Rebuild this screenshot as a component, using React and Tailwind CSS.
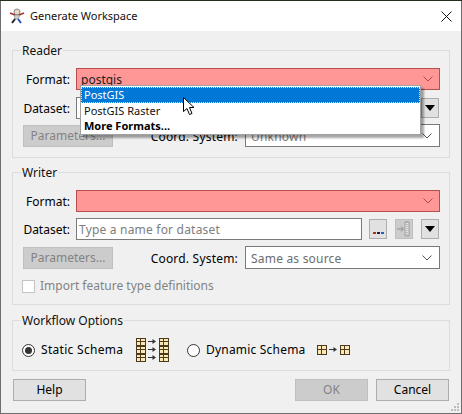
import React from "react";

const FONT = "font-['Noto_Sans','Open_Sans',sans-serif]";

function Chevron({ color = "#555" }) {
  return (
    <svg width="10" height="6" viewBox="0 0 10 6" fill="none">
      <path d="M0.5 0.5 L5 5 L9.5 0.5" stroke={color} strokeWidth="1" />
    </svg>
  );
}

function TableIcon({ x, y, h = 8 }) {
  return (
    <g transform={`translate(${x} ${y})`}>
      <rect x="0.5" y="0.5" width="9" height={h - 1} fill="#fde8b4" stroke="#4a3a20" />
      <path d={`M4.5 1V${h - 1}M1 ${h / 2 - 0.5}H9`} stroke="#4a3a20" strokeWidth="1" />
    </g>
  );
}

function Arrow({ x, y }) {
  return (
    <g transform={`translate(${x} ${y})`}>
      <path d="M0 3.5H5" stroke="#333" strokeWidth="1" />
      <path d="M4.5 1 L8 3.5 L4.5 6Z" fill="#333" />
    </g>
  );
}

function StaticSchemaIcon() {
  return (
    <svg width="33" height="24" viewBox="0 0 33 24" className="block shrink-0">
      {[0, 8, 16].map((y) => (
        <g key={y}>
          <TableIcon x={0} y={y} />
          <Arrow x={12} y={y} />
          <TableIcon x={23} y={y} />
        </g>
      ))}
    </svg>
  );
}

function DynamicSchemaIcon() {
  return (
    <svg width="33" height="10" viewBox="0 0 33 10" className="block shrink-0">
      <TableIcon x={0} y={0} h={10} />
      <Arrow x={12} y={1} />
      <TableIcon x={23} y={0} h={10} />
    </svg>
  );
}

function GroupBox({ title, className, children }) {
  return (
    <fieldset className={`border border-[#dcdcdc] mx-0 px-[9px] ${className}`}>
      <legend className="px-px -ml-px h-4 leading-4 pt-px text-[#111]">{title}</legend>
      {children}
    </fieldset>
  );
}

function Label({ children }) {
  return <div className="w-[48px] shrink-0 pt-px text-right whitespace-nowrap mr-[6px] text-black">{children}</div>;
}

function FormatCombo({ value, children }) {
  return (
    <div className="relative flex-1 h-[22px] border border-[#b64f4f] bg-[#ff9797] flex items-center pl-[4px] pr-[6px]">
      <span className="flex-1 pt-px text-[#1a1a1a]">{value}</span>
      <Chevron color="#b04a4a" />
      {children}
    </div>
  );
}

function CoordCombo({ value, muted }) {
  return (
    <div className="w-[195px] h-[23px] border border-[#7a7a7a] bg-white flex items-center pl-[5px] pr-[7px]">
      <span className={`flex-1 pt-[2px] tracking-[0.2px] ${muted ? "text-[#7d7d7d]" : "text-[#6d6d6d]"}`}>{value}</span>
      <Chevron />
    </div>
  );
}

function DatasetRow({ placeholder }) {
  return (
    <div className="flex items-center h-[22px]">
      <Label>Dataset:</Label>
      <div className="w-[286px] h-[22px] border border-[#7a7a7a] bg-white pl-[2px] pt-px leading-[20px] tracking-[0.2px] text-[#7d7d7d]">
        {placeholder}
      </div>
      <div className="ml-[7px] w-[18px] h-[20px] border border-[#adadad] bg-[#e1e1e1] flex items-end justify-center pb-[4px] gap-px">
        <i className="w-[3px] h-[2px] bg-[#b03020]" />
        <i className="w-[3px] h-[2px] bg-[#222]" />
        <i className="w-[3px] h-[2px] bg-[#2060c0]" />
      </div>
      <div className="ml-[8px] w-[18px] h-[20px] border border-[#bfbfbf] bg-[#cccccc] flex items-center justify-center">
        <svg width="14" height="16" viewBox="0 0 14 16" fill="none">
          <path d="M0 8H6M4 5.5L6.5 8L4 10.5" stroke="#8d8d8d" />
          <path d="M8 1H12V15H8Z" fill="#e6e6e6" stroke="#9a9a9a" />
          <path d="M10 1V15" stroke="#8d8d8d" strokeDasharray="1 1" />
        </svg>
      </div>
      <div className="ml-[8px] w-[18px] h-[20px] border border-[#adadad] bg-[#e1e1e1] flex items-center justify-center">
        <svg width="10" height="6" viewBox="0 0 10 6">
          <path d="M0 0H10L5 6Z" fill="#000" />
        </svg>
      </div>
    </div>
  );
}

function ParamsRow({ coordValue, muted }) {
  return (
    <div className="flex items-end h-[23px]">
      <button className="ml-px w-[90px] h-[22px] border border-[#bfbfbf] bg-[#cccccc] text-[#838383]">
        Parameters...
      </button>
      <div className="flex-1 self-center pt-[2px] text-right pr-[7px] tracking-[0.2px] text-black whitespace-nowrap">Coord. System:</div>
      <CoordCombo value={coordValue} muted={muted} />
    </div>
  );
}

function Btn({ disabled, children }) {
  return (
    <button
      className={`w-[73px] h-[22px] border ${
        disabled ? "border-[#bfbfbf] bg-[#cccccc] text-[#838383]" : "border-[#adadad] bg-[#e1e1e1] text-black"
      }`}
    >
      {children}
    </button>
  );
}

function Radio({ checked }) {
  return (
    <span className="w-[13px] h-[13px] rounded-full border border-[#333] bg-white flex items-center justify-center shrink-0">
      {checked && <span className="w-[7px] h-[7px] rounded-full bg-[#333]" />}
    </span>
  );
}

export default function App() {
  return (
    <div className={`${FONT} text-[12px] w-[462px] h-[414px] bg-[#f0f0f0] flex flex-col relative overflow-hidden`}>
      {/* strip of desktop above the window */}
      <div className="h-px bg-[#24301c] shrink-0" />
      <div className="flex-1 flex flex-col border-l border-r border-b border-[#6e6e6e] min-h-0">
        {/* title bar */}
        <div className="h-[30px] bg-white flex items-center shrink-0 pl-[8px] pr-[9px]">
          <svg width="16" height="16" viewBox="0 0 16 16" className="shrink-0">
            <circle cx="8" cy="4" r="3" fill="#e8d8c8" stroke="#888" />
            <path d="M1 5L6 7M15 5L10 7" stroke="#b03030" strokeWidth="1.5" />
            <path d="M5 7H11L9 11H6Z" fill="#cfcfcf" stroke="#666" strokeWidth="0.5" />
            <path d="M6 11L3 15" stroke="#222" strokeWidth="2" />
            <path d="M9 11L12 15" stroke="#2050c0" strokeWidth="2" />
          </svg>
          <span className="ml-[5px] text-[11px] text-[#111]">Generate Workspace</span>
          <svg width="11" height="11" viewBox="0 0 11 11" className="ml-auto shrink-0">
            <path d="M0.5 0.5L10.5 10.5M10.5 0.5L0.5 10.5" stroke="#111" strokeWidth="1" />
          </svg>
        </div>

        <div className="flex-1 flex flex-col pl-[11px] pr-[11px] relative">
          <GroupBox title="Reader" className="mt-[11px] h-[116px]">
            <div className="flex items-center mt-[10px] h-[22px]">
              <Label>Format:</Label>
              <FormatCombo value="postgis">
                {/* open dropdown */}
                <div className="absolute left-[3px] top-[16px] w-[341px] h-[50px] z-10 bg-white border border-[#a0a0a0] shadow-[3px_3px_2px_rgba(0,0,0,0.35)] py-px text-[11px]">
                  <div className="h-[16px] leading-[14px] px-[2px] bg-[#0078d7] text-white border border-dotted border-[#cfe4f7]">PostGIS</div>
                  <div className="h-[15px] leading-[15px] px-[3px] text-[#111]">PostGIS Raster</div>
                  <div className="h-[15px] leading-[15px] px-[3px] text-black font-bold">More Formats...</div>
                </div>
              </FormatCombo>
            </div>
            <div className="mt-[7px]">
              <DatasetRow />
            </div>
            <div className="mt-[5px]">
              <ParamsRow coordValue="Unknown" muted />
            </div>
          </GroupBox>

          <GroupBox title="Writer" className="mt-[6px] h-[141px]">
            <div className="flex items-center mt-[10px] h-[22px]">
              <Label>Format:</Label>
              <FormatCombo />
            </div>
            <div className="mt-[6px]">
              <DatasetRow placeholder="Type a name for dataset" />
            </div>
            <div className="mt-[6px]">
              <ParamsRow coordValue="Same as source" />
            </div>
            <div className="flex items-center mt-[8px] text-[#838383]">
              <span className="w-[13px] h-[13px] border border-[#c4c4c4] bg-white shrink-0" />
              <span className="ml-[5px]">Import feature type definitions</span>
            </div>
          </GroupBox>

          <GroupBox title="Workflow Options" className="mt-[7px] h-[59px]">
            <div className="flex items-center h-[24px] mt-[10px]">
              <Radio checked />
              <span className="ml-[6px] w-[82px] tracking-[0.3px] whitespace-nowrap text-black">Static Schema</span>
              <span className="ml-[13px]"><StaticSchemaIcon /></span>
              <span className="ml-[18px]"><Radio /></span>
              <span className="ml-[6px] w-[98px] tracking-[0.2px] whitespace-nowrap text-black">Dynamic Schema</span>
              <span className="ml-[13px]"><DynamicSchemaIcon /></span>
            </div>
          </GroupBox>

          <div className="flex mt-[8px] pl-px pr-px">
            <Btn>Help</Btn>
            <div className="ml-auto flex gap-[8px]">
              <Btn disabled>OK</Btn>
              <Btn>Cancel</Btn>
            </div>
          </div>
        </div>
      </div>

      {/* mouse pointer over the dropdown */}
      <svg width="13" height="19" viewBox="0 0 13 19" className="absolute left-[183px] top-[97px] z-20">
        <path d="M0.5 0.5V14.5L4 11.5L6.5 17.5L9 16.5L6.5 10.5H11Z" fill="#fff" stroke="#000" strokeWidth="1" />
      </svg>

      {/* resize grip */}
      <svg width="10" height="10" viewBox="0 0 10 10" className="absolute right-[2px] bottom-[2px]">
        <path d="M7 1h2v2H7zM4 4h2v2H4zM7 4h2v2H7zM1 7h2v2H1zM4 7h2v2H4zM7 7h2v2H7z" fill="#bdbdbd" />
      </svg>
    </div>
  );
}
